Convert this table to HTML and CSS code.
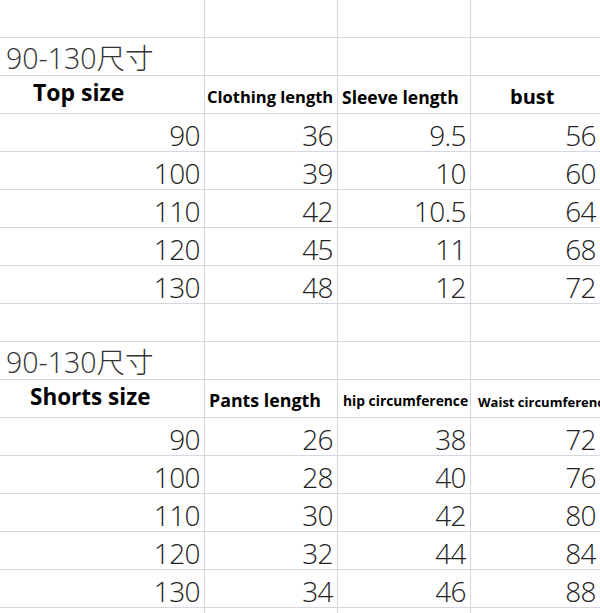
FILE: index.html
```html
<!DOCTYPE html>
<html lang="zh">
<head>
<meta charset="utf-8">
<title>90-130尺寸</title>
<link rel="stylesheet" href="styles.css">
</head>
<body>
<div class="sheet">
  <div class="c"></div><div class="c"></div><div class="c"></div><div class="c"></div>

  <div class="c title">90-130尺寸</div><div class="c"></div><div class="c"></div><div class="c"></div>

  <div class="c h h-top">Top size</div>
  <div class="c h h-cloth">Clothing length</div>
  <div class="c h h-sleeve">Sleeve length</div>
  <div class="c h h-bust">bust</div>

  <div class="c n">90</div><div class="c n">36</div><div class="c n">9.5</div><div class="c n">56</div>
  <div class="c n">100</div><div class="c n">39</div><div class="c n">10</div><div class="c n">60</div>
  <div class="c n">110</div><div class="c n">42</div><div class="c n">10.5</div><div class="c n">64</div>
  <div class="c n">120</div><div class="c n">45</div><div class="c n">11</div><div class="c n">68</div>
  <div class="c n">130</div><div class="c n">48</div><div class="c n">12</div><div class="c n">72</div>

  <div class="c"></div><div class="c"></div><div class="c"></div><div class="c"></div>

  <div class="c title">90-130尺寸</div><div class="c"></div><div class="c"></div><div class="c"></div>

  <div class="c h h-shorts">Shorts size</div>
  <div class="c h h-pants">Pants length</div>
  <div class="c h h-hip">hip circumference</div>
  <div class="c h h-waist">Waist circumference</div>

  <div class="c n">90</div><div class="c n">26</div><div class="c n">38</div><div class="c n">72</div>
  <div class="c n">100</div><div class="c n">28</div><div class="c n">40</div><div class="c n">76</div>
  <div class="c n">110</div><div class="c n">30</div><div class="c n">42</div><div class="c n">80</div>
  <div class="c n">120</div><div class="c n">32</div><div class="c n">44</div><div class="c n">84</div>
  <div class="c n">130</div><div class="c n">34</div><div class="c n">46</div><div class="c n">88</div>

  <div class="c"></div><div class="c"></div><div class="c"></div><div class="c"></div>
</div>
</body>
</html>
```
FILE: styles.css
```css
html, body {
  margin: 0;
  padding: 0;
  background: #ffffff;
  overflow: hidden;
}

.sheet {
  width: 600px;
  height: 613px;
  overflow: hidden;
  display: grid;
  grid-template-columns: 204px 132px 132px 1fr;
  grid-auto-rows: 37px;
  gap: 1px;
  background: #d6d7de;
}

.c {
  background: #ffffff;
  display: flex;
  align-items: flex-end;
  white-space: nowrap;
  overflow: visible;
  min-width: 0;
}

.n {
  justify-content: flex-end;
  font-family: "Open Sans", "Noto Sans", sans-serif;
  font-weight: 300;
  font-size: 28px;
  letter-spacing: -0.6px;
  line-height: 1;
  color: #222222;
  padding: 0 4px 2px 0;
}

.title {
  font-family: "Open Sans", "Noto Sans CJK SC", sans-serif;
  font-weight: 300;
  font-size: 28.5px;
  line-height: 1;
  color: #333333;
  padding: 0 0 3px 6px;
}

.h {
  font-family: "Open Sans", "Noto Sans", sans-serif;
  font-weight: 700;
  color: #000000;
  line-height: 1;
}

.h-top { font-size: 23px; padding: 0 0 9px 33px; }
.h-cloth { font-size: 16.5px; padding: 0 0 8px 2px; }
.h-sleeve { font-size: 17.5px; padding: 0 0 7px 4px; }
.h-bust { font-size: 20px; padding: 0 0 6px 39px; }

.h-shorts { font-size: 22.5px; padding: 0 0 9px 30px; }
.h-pants { font-size: 17.8px; padding: 0 0 7px 4px; }
.h-hip { font-size: 13.8px; padding: 0 0 9px 5px; }
.h-waist { font-size: 13px; padding: 0 0 8px 7px; overflow: hidden; }
```
